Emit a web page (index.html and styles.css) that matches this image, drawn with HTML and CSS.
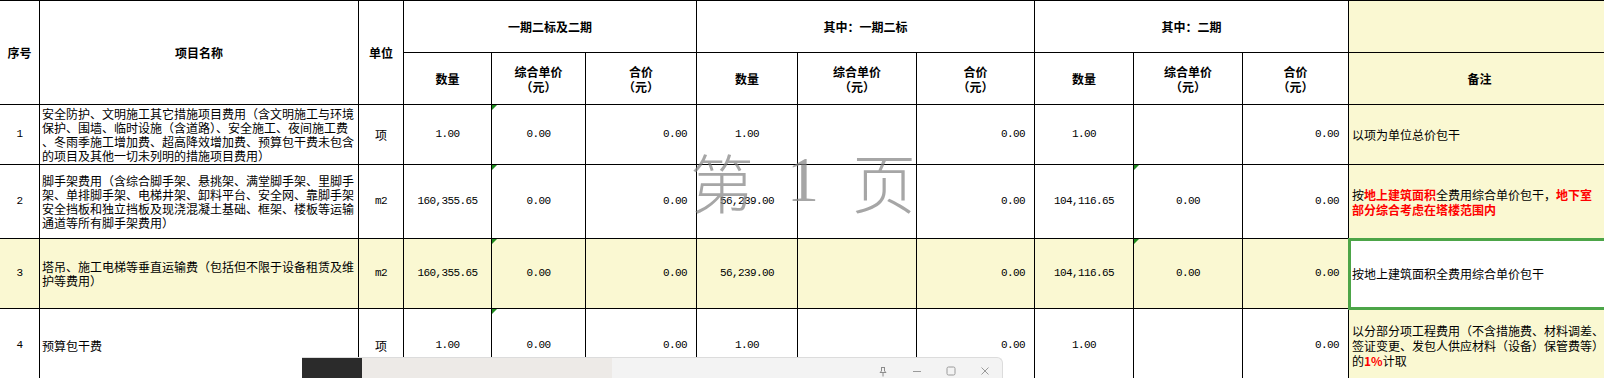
FILE: index.html
```html
<!DOCTYPE html>
<html lang="zh-CN">
<head>
<meta charset="utf-8">
<title>措施项目费</title>
<link rel="stylesheet" href="styles.css">
</head>
<body>
<div class="sheet">
  <div class="c h rows2">序号</div>
  <div class="c h rows2">项目名称</div>
  <div class="c h rows2">单位</div>
  <div class="c h cols3">一期二标及二期</div>
  <div class="c h cols3">其中：一期二标</div>
  <div class="c h cols3">其中：二期</div>
  <div class="c h note"></div>

  <div class="c h">数量</div>
  <div class="c h"><span>综合单价<br>（元）</span></div>
  <div class="c h"><span>合价<br>（元）</span></div>
  <div class="c h">数量</div>
  <div class="c h"><span>综合单价<br>（元）</span></div>
  <div class="c h"><span>合价<br>（元）</span></div>
  <div class="c h">数量</div>
  <div class="c h"><span>综合单价<br>（元）</span></div>
  <div class="c h"><span>合价<br>（元）</span></div>
  <div class="c h note">备注</div>

  <!-- row 1 -->
  <div class="c num">1</div>
  <div class="c name"><span>安全防护、文明施工其它措施项目费用（含文明施工与环境<br>保护、围墙、临时设施（含道路）、安全施工、夜间施工费<br>、冬雨季施工增加费、超高降效增加费、预算包干费未包含<br>的项目及其他一切未列明的措施项目费用）</span></div>
  <div class="c">项</div>
  <div class="c num">1.00</div>
  <div class="c num flag">0.00</div>
  <div class="c num right">0.00</div>
  <div class="c num">1.00</div>
  <div class="c num"></div>
  <div class="c num right">0.00</div>
  <div class="c num">1.00</div>
  <div class="c num"></div>
  <div class="c num right">0.00</div>
  <div class="c text note">以项为单位总价包干</div>

  <!-- row 2 -->
  <div class="c num">2</div>
  <div class="c name"><span>脚手架费用（含综合脚手架、悬挑架、满堂脚手架、里脚手<br>架、单排脚手架、电梯井架、卸料平台、安全网、靠脚手架<br>安全挡板和独立挡板及现浇混凝土基础、框架、楼板等运输<br>通道等所有脚手架费用）</span></div>
  <div class="c num">m2</div>
  <div class="c num">160,355.65</div>
  <div class="c num flag">0.00</div>
  <div class="c num right">0.00</div>
  <div class="c num">56,239.00</div>
  <div class="c num"></div>
  <div class="c num right">0.00</div>
  <div class="c num">104,116.65</div>
  <div class="c num flag">0.00</div>
  <div class="c num right">0.00</div>
  <div class="c text note"><span>按<b class="red">地上建筑面积</b>全费用综合单价包干，<b class="red">地下室</b><br><b class="red">部分综合考虑在塔楼范围内</b></span></div>

  <!-- row 3 -->
  <div class="c num hl">3</div>
  <div class="c name hl"><span>塔吊、施工电梯等垂直运输费（包括但不限于设备租赁及维<br>护等费用）</span></div>
  <div class="c num hl">m2</div>
  <div class="c num hl">160,355.65</div>
  <div class="c num flag hl">0.00</div>
  <div class="c num right hl">0.00</div>
  <div class="c num hl">56,239.00</div>
  <div class="c num hl"></div>
  <div class="c num right hl">0.00</div>
  <div class="c num hl">104,116.65</div>
  <div class="c num flag hl">0.00</div>
  <div class="c num right hl">0.00</div>
  <div class="c text selected">按地上建筑面积全费用综合单价包干</div>

  <!-- row 4 -->
  <div class="c num">4</div>
  <div class="c name">预算包干费</div>
  <div class="c">项</div>
  <div class="c num">1.00</div>
  <div class="c num flag">0.00</div>
  <div class="c num right">0.00</div>
  <div class="c num">1.00</div>
  <div class="c num"></div>
  <div class="c num right">0.00</div>
  <div class="c num">1.00</div>
  <div class="c num"></div>
  <div class="c num right">0.00</div>
  <div class="c text note"><span>以分部分项工程费用（不含措施费、材料调差、<br>签证变更、发包人供应材料（设备）保管费等）<br>的<b class="red">1%</b>计取</span></div>
</div>

<div class="watermark"><span>第</span><span class="wm-num">1</span><span>页</span></div>

<div class="taskwin">
  <div class="tw-dark"></div>
  <div class="tw-tab"></div>
  <div class="tw-fill"></div>
  <div class="tw-ctrl">
    <svg width="10" height="11" viewBox="0 0 10 11"><path d="M3 1.5h4M3.5 1.5v3.5L2 6.5h6L6.5 5V1.5M5 6.5v4" fill="none" stroke="#8c8c8c" stroke-width="1"/></svg>
  </div>
  <div class="tw-ctrl">
    <svg width="10" height="10" viewBox="0 0 10 10"><path d="M1 5.5h8" stroke="#9a9a9a" stroke-width="1"/></svg>
  </div>
  <div class="tw-ctrl">
    <svg width="10" height="10" viewBox="0 0 10 10"><rect x="1" y="1" width="8" height="8" rx="1.5" fill="none" stroke="#9a9a9a" stroke-width="1"/></svg>
  </div>
  <div class="tw-ctrl">
    <svg width="10" height="10" viewBox="0 0 10 10"><path d="M1.5 1.5l7 7M8.5 1.5l-7 7" stroke="#9a9a9a" stroke-width="1"/></svg>
  </div>
</div>
</body>
</html>
```

FILE: styles.css
```css
html, body {
  margin: 0;
  padding: 0;
  overflow: hidden;
  background: #ffffff;
}

body {
  width: 1604px;
  height: 378px;
  position: relative;
  font-family: "Noto Sans CJK SC", "Noto Sans", sans-serif;
  font-size: 12px;
  color: #000;
}

.sheet {
  display: grid;
  grid-template-columns: 40px 319px 45px 88px 94px 111px 101px 119px 118px 99px 109px 106px 262px;
  grid-template-rows: 52px 52px 60px 74px 70px 74px;
  border-top: 1px solid #000;
  width: max-content;
}

.c {
  box-sizing: border-box;
  border-right: 1px solid #000;
  border-bottom: 1px solid #000;
  display: flex;
  align-items: center;
  justify-content: center;
  text-align: center;
  line-height: 15px;
  position: relative;
  white-space: nowrap;
  background: #fff;
}

.h {
  font-weight: bold;
  line-height: 15px;
}

.rows2 { grid-row: span 2; }
.cols3 { grid-column: span 3; }

.note { background: #faf8d2; }
.hl { background: #faf8d2; }

.num {
  font-family: "Liberation Mono", monospace;
  font-size: 11px;
  letter-spacing: -0.6px;
}

.right {
  justify-content: flex-end;
  padding-right: 9px;
}

.name {
  justify-content: flex-start;
  text-align: left;
  padding-left: 2px;
  line-height: 14px;
}

.text {
  justify-content: flex-start;
  text-align: left;
  padding-left: 3px;
  line-height: 15px;
}

.red {
  color: #ff0000;
  font-weight: bold;
}

.selected {
  background: #ffffff;
  outline: 3px solid #4ca548;
  outline-offset: -2px;
  z-index: 1;
}

.flag::before {
  content: "";
  position: absolute;
  left: 0;
  top: 0;
  width: 0;
  height: 0;
  border-top: 5px solid #1f8a1f;
  border-right: 5px solid transparent;
}

.watermark {
  position: absolute;
  left: 690px;
  top: 148px;
  display: flex;
  gap: 33px;
  font-size: 64px;
  line-height: 64px;
  font-weight: 300;
  color: rgba(128, 128, 128, 0.7);
  pointer-events: none;
  z-index: 2;
}

.wm-num {
  font-family: "Liberation Serif", serif;
}

.taskwin {
  position: absolute;
  left: 302px;
  top: 357px;
  width: 700px;
  height: 26px;
  display: flex;
  background: #f3f3f3;
  border-top: 1px solid #dcdcdc;
  border-right: 1px solid #dcdcdc;
  border-top-right-radius: 6px;
  overflow: hidden;
  z-index: 3;
}

.tw-dark {
  width: 60px;
  background: #2b2b2b;
}

.tw-tab {
  width: 250px;
  background: #edeae7;
}

.tw-fill {
  flex: 1;
}

.tw-ctrl {
  width: 34px;
  height: 26px;
  display: flex;
  align-items: center;
  justify-content: center;
}
```
